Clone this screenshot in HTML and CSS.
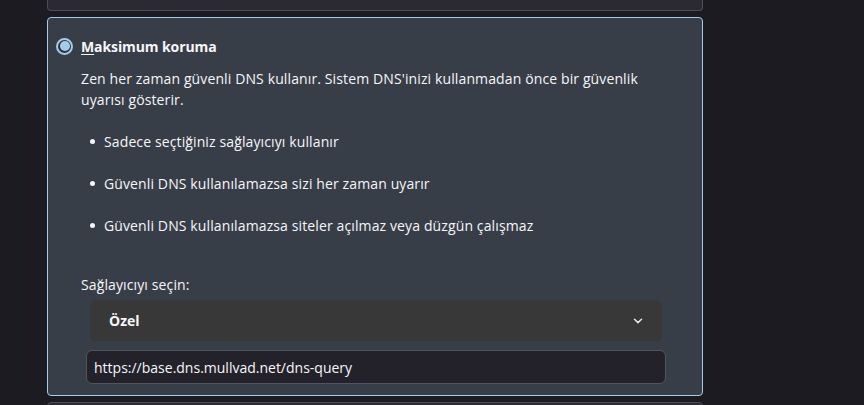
FILE: index.html
```html
<!DOCTYPE html>
<html lang="tr">
<head>
<meta charset="utf-8">
<title>DNS</title>
<link rel="stylesheet" href="styles.css">
</head>
<body>
<div class="page">
  <div class="card card-prev"></div>
  <div class="card card-selected">
    <div class="option-head">
      <span class="radio"><span class="radio-dot"></span></span>
      <span class="option-title"><span class="accesskey">M</span>aksimum koruma</span>
    </div>
    <p class="desc">Zen her zaman güvenli DNS kullanır. Sistem DNS'inizi kullanmadan önce bir güvenlik uyarısı gösterir.</p>
    <ul class="points">
      <li>Sadece seçtiğiniz sağlayıcıyı kullanır</li>
      <li>Güvenli DNS kullanılamazsa sizi her zaman uyarır</li>
      <li>Güvenli DNS kullanılamazsa siteler açılmaz veya düzgün çalışmaz</li>
    </ul>
    <div class="provider-label">Sağlayıcıyı seçin:</div>
    <div class="select">
      <span class="select-value">Özel</span>
      <svg class="chevron" width="10" height="6" viewBox="0 0 10 6"><path d="M1.5 1.2 L5 4.6 L8.5 1.2" fill="none" stroke="#e6e6ea" stroke-width="1.5" stroke-linecap="round" stroke-linejoin="round"/></svg>
    </div>
    <div class="url-input">https://base.dns.mullvad.net/dns-query</div>
  </div>
  <div class="card card-next"></div>
</div>
</body>
</html>
```

FILE: styles.css
```css
html, body {
  margin: 0;
  padding: 0;
  background: #1c1b22;
  height: 100%;
  overflow: hidden;
}
body {
  font-family: "Open Sans", "Noto Sans", sans-serif;
  color: #f6f6f8;
  font-size: 14px;
  letter-spacing: 0.12px;
}
.page {
  width: 656px;
  margin-left: 47px;
  display: flex;
  flex-direction: column;
  gap: 6px;
}
.card {
  box-sizing: border-box;
  border-radius: 4px;
}
.card-prev {
  height: 11px;
  background: #2b2a33;
  border: 1px solid #4e4d55;
  border-top: none;
  border-radius: 0 0 4px 4px;
}
.card-selected {
  background: #373e48;
  border: 1px solid #a5cbe9;
  height: 379px;
  padding: 17px 36px 0 9px;
}
.card-next {
  height: 20px;
  background: #2b2a33;
  border: 1px solid #4e4d55;
}
.option-head {
  display: flex;
  align-items: center;
  height: 22px;
}
.radio {
  box-sizing: border-box;
  width: 17px;
  height: 17px;
  border-radius: 50%;
  border: 2px solid #a5cbe9;
  background: #2b3540;
  display: flex;
  align-items: center;
  justify-content: center;
  margin-right: 8px;
  margin-left: -1px;
}
.radio-dot {
  width: 10px;
  height: 10px;
  border-radius: 50%;
  background: #a5cbe9;
}
.option-title {
  font-weight: 700;
  font-size: 14px;
  letter-spacing: -0.1px;
}
.accesskey {
  text-decoration: underline;
  text-underline-offset: 2px;
}
.desc {
  margin: 11px 0 0 24px;
  line-height: 21px;
  width: 585px;
}
.points {
  list-style: none;
  margin: 21px 0 0 24px;
  padding: 0 0 0 9px;
  line-height: 21px;
}
.points li {
  display: flex;
  align-items: center;
  margin-bottom: 21px;
}
.points li::before {
  content: "";
  width: 5px;
  height: 5px;
  border-radius: 50%;
  background: #f6f6f8;
  margin-right: 9px;
  flex: none;
}
.points li:last-child {
  margin-bottom: 0;
}
.provider-label {
  margin: 38px 0 0 24px;
  line-height: 21px;
}
.select {
  box-sizing: border-box;
  margin: 5px 4px 0 33px;
  height: 41px;
  background: #383838;
  border-radius: 6px;
  display: flex;
  align-items: center;
  justify-content: space-between;
  padding: 0 19px 0 19px;
}
.select-value {
  font-weight: 700;
  letter-spacing: 0;
}
.chevron {
  display: block;
}
.url-input {
  box-sizing: border-box;
  margin: 9px 0 0 29px;
  height: 34px;
  background: #23222b;
  border: 1px solid #55545c;
  border-radius: 6px;
  padding: 0 7px;
  display: flex;
  align-items: center;
  letter-spacing: 0;
}
```
